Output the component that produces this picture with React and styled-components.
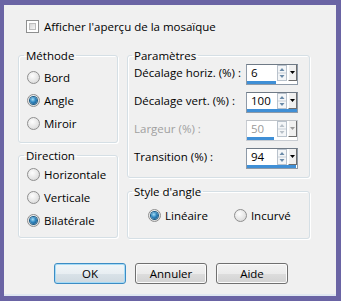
import React from "react";
import styled, { createGlobalStyle, css } from "styled-components";

const GlobalStyle = createGlobalStyle`
  html, body {
    margin: 0;
    padding: 0;
    background: #f0f0f0;
  }
`;

const Frame = styled.div`
  width: 341px;
  height: 301px;
  box-sizing: border-box;
  border: solid #6a64a4;
  border-width: 5px 5px 5px 4px;
  background: #f0f0f0;
  box-shadow: inset 0 -2px 0 #dfe7f1;
  display: flex;
  flex-direction: column;
  padding: 13px 26px 0 14px;
  font-family: "Open Sans", "Noto Sans", sans-serif;
  font-size: 11.5px;
  color: #000;
`;

const CheckRow = styled.label`
  display: flex;
  align-items: center;
  gap: 5px;
  margin-left: 8px;
  height: 16px;
  line-height: 15px;
`;

const CheckBox = styled.span`
  width: 13px;
  height: 13px;
  box-sizing: border-box;
  border: 1px solid #8e8f8f;
  background: #fff;
  padding: 2px;
  display: flex;

  &::after {
    content: "";
    flex: 1;
    border: 1px solid #bcbcbc;
    background: linear-gradient(135deg, #d6d6d6, #f6f6f6);
  }
`;

const Columns = styled.div`
  display: flex;
  gap: 9px;
  margin-top: 14px;
`;

const Column = styled.div`
  display: flex;
  flex-direction: column;
  width: ${(p) => p.$width}px;
  gap: ${(p) => p.$gap}px;
`;

const Group = styled.fieldset`
  margin: 0;
  min-width: 0;
  border: 1px solid #d5dfe5;
  border-radius: 3px;
  box-shadow: inset 1px 1px 0 #fff, 1px 1px 0 #fff;
  padding: ${(p) => p.$pad};
`;

const Legend = styled.legend`
  padding: 0 2px;
  margin-left: ${(p) => p.$offset || -3}px;
  line-height: 15px;
`;

const RadioRow = styled.label`
  display: flex;
  align-items: center;
  gap: 4px;
  height: 23px;
  line-height: 15px;
`;

const RadioDot = styled.span`
  width: 13px;
  height: 13px;
  box-sizing: border-box;
  border-radius: 50%;
  border: 1px solid #8f8f8f;
  background: radial-gradient(circle at 40% 35%, #fdfdfd 0%, #e4e4e4 60%, #cfcfcf 100%);
  display: flex;
  align-items: center;
  justify-content: center;

  ${(p) =>
    p.$checked &&
    css`
      &::after {
        content: "";
        width: 7px;
        height: 7px;
        border-radius: 50%;
        background: radial-gradient(circle at 40% 35%, #a6def5 0%, #2f86c0 45%, #0c4877 100%);
        box-shadow: 0 0 0 1px #1c5b85;
      }
    `}
`;

const InlineRadios = styled.div`
  display: flex;
  gap: 26px;
  padding-left: 14px;
`;

const ParamGrid = styled.div`
  display: grid;
  grid-template-columns: 1fr 52px;
  grid-auto-rows: 28px;
  align-items: center;
  margin-top: -3px;
`;

const ParamLabel = styled.span`
  line-height: 15px;
  margin-top: -4px;
  white-space: nowrap;
  color: ${(p) => (p.$disabled ? "#a0a0a0" : "#000")};
`;

const SpinBox = styled.div`
  width: 52px;
  height: 21px;
  box-sizing: border-box;
  border: 1px solid ${(p) => (p.$disabled ? "#c8ccd2" : "#8e9aa8")};
  border-top-color: ${(p) => (p.$disabled ? "#bfc3c8" : "#6f7a86")};
  background: #fff;
  display: flex;
  flex-direction: column;
`;

const SpinTop = styled.div`
  flex: 1;
  display: flex;
  align-items: stretch;
`;

const SpinValue = styled.span`
  flex: 1;
  padding-left: 4px;
  line-height: 16px;
  color: ${(p) => (p.$disabled ? "#9a9a9a" : "#000")};
`;

const SpinArrows = styled.svg`
  width: 10px;
  height: 16px;
  align-self: center;
`;

const DropButton = styled.span`
  width: 9px;
  box-sizing: border-box;
  background: #f0f0f0;
  border-left: 1px solid #fff;
  border-right: 1px solid #6e6e6e;
  border-bottom: 1px solid #6e6e6e;
  display: flex;
  align-items: center;
  justify-content: center;
  margin-left: 1px;
`;

const Bar = styled.div`
  height: 3px;
  background: #3f8fd6;
`;

const ButtonRow = styled.div`
  display: flex;
  gap: 9px;
  margin-top: 24px;
  margin-left: 36px;
`;

const Button = styled.button`
  width: 72px;
  height: 21px;
  box-sizing: border-box;
  border-radius: 3px;
  font-family: inherit;
  font-size: 11.5px;
  color: #000;
  padding: 0;
  border: 1px solid ${(p) => (p.$primary ? "#3c8cc4" : "#707070")};
  box-shadow: inset 0 0 0 1px ${(p) => (p.$primary ? "#a6dbf6" : "#fbfbfb")};
  background: ${(p) =>
    p.$primary
      ? "linear-gradient(#f0f5f8 0%, #e8eef2 50%, #d9e2e8 51%, #cfd9e0 100%)"
      : "linear-gradient(#f2f2f2 0%, #ebebeb 50%, #dddddd 51%, #d2d2d2 100%)"};
`;

const Radio = ({ label, checked }) => (
  <RadioRow>
    <RadioDot $checked={checked} />
    {label}
  </RadioRow>
);

const Spin = ({ value, fill, disabled }) => (
  <SpinBox $disabled={disabled}>
    <SpinTop>
      <SpinValue $disabled={disabled}>{value}</SpinValue>
      <SpinArrows viewBox="0 0 10 16">
        <rect x="0.5" y="0.5" width="9" height="15" fill="#f4f6f8" stroke="#b9c2cc" />
        <line x1="1" y1="8" x2="9" y2="8" stroke="#c9d0d8" />
        <path d="M2.5 6 L5 3 L7.5 6 Z" fill={disabled ? "#b8c0c8" : "#6a8aa8"} />
        <path d="M2.5 10 L5 13 L7.5 10 Z" fill={disabled ? "#b8c0c8" : "#6a8aa8"} />
      </SpinArrows>
      <DropButton>
        <svg width="5" height="3" viewBox="0 0 5 3">
          <path d="M0 0 H5 L2.5 3 Z" fill={disabled ? "#9a9a9a" : "#000"} />
        </svg>
      </DropButton>
    </SpinTop>
    <Bar style={{ width: `${fill}%` }} />
  </SpinBox>
);

export default function App() {
  return (
    <>
      <GlobalStyle />
      <Frame>
        <CheckRow>
          <CheckBox />
          Afficher l'aperçu de la mosaïque
        </CheckRow>
        <Columns>
          <Column $width={100} $gap={5}>
            <Group $pad="3px 0 7px 8px">
              <Legend>Méthode</Legend>
              <Radio label="Bord" />
              <Radio label="Angle" checked />
              <Radio label="Miroir" />
            </Group>
            <Group $pad="0 0 5px 8px">
              <Legend>Direction</Legend>
              <Radio label="Horizontale" />
              <Radio label="Verticale" />
              <Radio label="Bilatérale" checked />
            </Group>
          </Column>
          <Column $width={183} $gap={6}>
            <Group $pad="0 11px 5px 6px">
              <Legend $offset={-2}>Paramètres</Legend>
              <ParamGrid>
                <ParamLabel>Décalage horiz. (%) :</ParamLabel>
                <Spin value="6" fill={58} />
                <ParamLabel>Décalage vert. (%) :</ParamLabel>
                <Spin value="100" fill={100} />
                <ParamLabel $disabled>Largeur (%) :</ParamLabel>
                <Spin value="50" fill={54} disabled />
                <ParamLabel>Transition (%) :</ParamLabel>
                <Spin value="94" fill={98} />
              </ParamGrid>
            </Group>
            <Group $pad="5px 0 11px 6px">
              <Legend $offset={-2}>Style d'angle</Legend>
              <InlineRadios>
                <Radio label="Linéaire" checked />
                <Radio label="Incurvé" />
              </InlineRadios>
            </Group>
          </Column>
        </Columns>
        <ButtonRow>
          <Button $primary>OK</Button>
          <Button>Annuler</Button>
          <Button>Aide</Button>
        </ButtonRow>
      </Frame>
    </>
  );
}
